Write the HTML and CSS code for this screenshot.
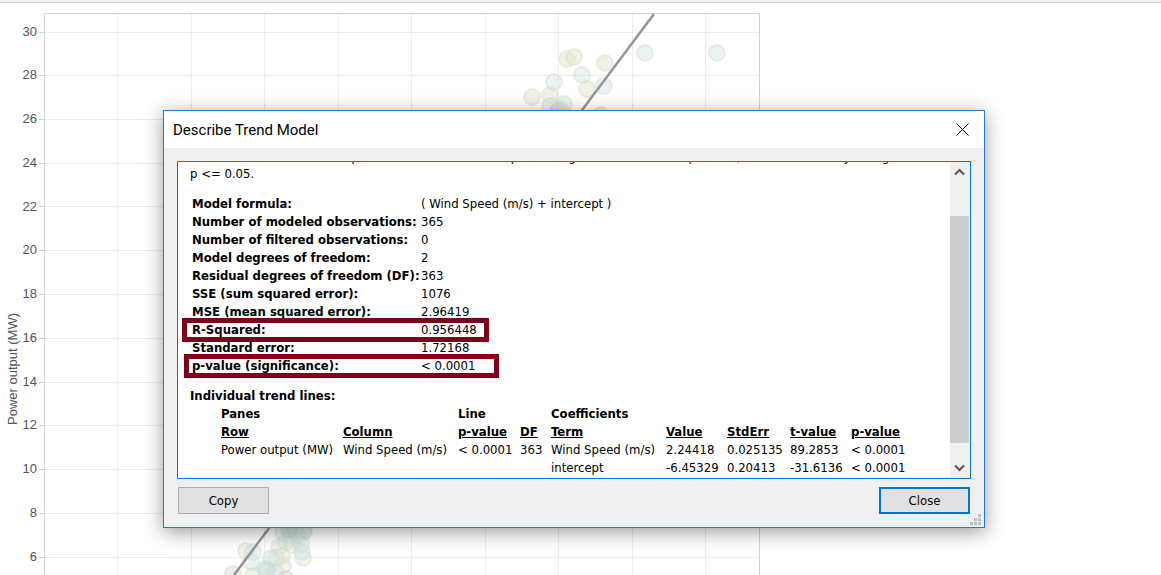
FILE: index.html
```html
<!DOCTYPE html>
<html lang="en">
<head>
<meta charset="utf-8">
<title>Describe Trend Model</title>
<link rel="stylesheet" href="styles.css">
</head>
<body>
<main class="sheet">
  <svg class="chart" width="762" height="575" viewBox="0 0 762 575" role="img" aria-label="Power output (MW) by wind speed">
    <path class="grid" d="M117.500 14V575M191.500 14V575M264.500 14V575M338.500 14V575M411.500 14V575M485.500 14V575M558.500 14V575M632.500 14V575M705.500 14V575M45 32.500H759M45 75.500H759M45 119.500H759M45 163.500H759M45 206.500H759M45 250.500H759M45 294.500H759M45 338.500H759M45 382.500H759M45 425.500H759M45 469.500H759M45 513.500H759M45 557.500H759"/>
    <path class="frame" d="M44.500 575V13.500H759.500V575M39 32.500H44M39 75.500H44M39 119.500H44M39 163.500H44M39 206.500H44M39 250.500H44M39 294.500H44M39 338.500H44M39 382.500H44M39 425.500H44M39 469.500H44M39 513.500H44M39 557.500H44"/>
    <g class="dots">
      <g class="yellow">
        <circle cx="567" cy="59" r="8"/><circle cx="574" cy="57" r="8"/><circle cx="605" cy="63" r="8"/>
        <circle cx="587" cy="89" r="8"/><circle cx="532" cy="97" r="8"/><circle cx="550" cy="95" r="8"/><circle cx="560" cy="109" r="8"/>
        <circle cx="246" cy="551" r="8"/><circle cx="279" cy="547" r="8"/><circle cx="282" cy="556" r="8"/><circle cx="303" cy="558" r="8"/>
        <circle cx="283" cy="566" r="8"/><circle cx="253" cy="576" r="8"/><circle cx="304" cy="531" r="8"/><circle cx="292" cy="545" r="8"/><circle cx="276" cy="558" r="8"/>
      </g>
      <g class="blue">
        <circle cx="645" cy="53" r="8"/><circle cx="717" cy="53" r="8"/><circle cx="582" cy="75" r="8"/><circle cx="554" cy="82" r="8"/>
        <circle cx="604" cy="86" r="8"/><circle cx="564" cy="104" r="8"/><circle cx="550" cy="106" r="8"/>
        <circle cx="253" cy="552" r="8"/><circle cx="251" cy="562" r="8"/><circle cx="271" cy="558" r="8"/><circle cx="265" cy="569" r="8"/>
        <circle cx="283" cy="532" r="8"/><circle cx="290" cy="535" r="8"/><circle cx="298" cy="535" r="8"/><circle cx="303" cy="532" r="8"/>
        <circle cx="286" cy="542" r="8"/><circle cx="301" cy="544" r="8"/><circle cx="302" cy="552" r="8"/><circle cx="275" cy="572" r="8"/><circle cx="295" cy="529" r="8"/>
      </g>
      <g class="teal">
        <circle cx="601" cy="115" r="8"/><circle cx="558" cy="111" r="8"/><circle cx="233" cy="574" r="8"/><circle cx="286" cy="579" r="8"/><circle cx="289" cy="530" r="8"/><circle cx="267" cy="570" r="8"/>
      </g>
    </g>
    <path class="trend" d="M234 575L654 14"/>
    <g class="ticks">
      <text x="37" y="36">30</text><text x="37" y="79">28</text><text x="37" y="123">26</text><text x="37" y="167">24</text>
      <text x="37" y="211">22</text><text x="37" y="254">20</text><text x="37" y="298">18</text><text x="37" y="342">16</text>
      <text x="37" y="386">14</text><text x="37" y="429">12</text><text x="37" y="473">10</text><text x="37" y="517">8</text><text x="37" y="561">6</text>
    </g>
    <text class="axis-title" transform="translate(17 369) rotate(-90)">Power output (MW)</text>
  </svg>

  <section class="dialog" role="dialog" aria-labelledby="dialog-title">
    <header class="titlebar">
      <h1 class="title" id="dialog-title">Describe Trend Model</h1>
      <button class="dismiss" type="button" aria-label="Close window">
        <svg width="13" height="13" viewBox="0 0 13 13"><path d="M.5 .5L12.500 12.500M12.500 .5L.5 12.500"/></svg>
      </button>
    </header>
    <div class="content">
      <div class="report">
        <div class="text">
          <p class="intro">A linear trend model is computed for sum of Power output (MW) given sum of Wind Speed (m/s). The model may be significant at<br>p &lt;= 0.05.</p>
          <table class="summary">
            <tr><th scope="row">Model formula:</th><td>( Wind Speed (m/s) + intercept )</td></tr>
            <tr><th scope="row">Number of modeled observations:</th><td>365</td></tr>
            <tr><th scope="row">Number of filtered observations:</th><td>0</td></tr>
            <tr><th scope="row">Model degrees of freedom:</th><td>2</td></tr>
            <tr><th scope="row">Residual degrees of freedom (DF):</th><td>363</td></tr>
            <tr><th scope="row">SSE (sum squared error):</th><td>1076</td></tr>
            <tr><th scope="row">MSE (mean squared error):</th><td>2.96419</td></tr>
            <tr class="marked marked-r"><th scope="row">R-Squared:</th><td>0.956448</td></tr>
            <tr><th scope="row">Standard error:</th><td>1.72168</td></tr>
            <tr class="marked marked-p"><th scope="row">p-value (significance):</th><td>&lt; 0.0001</td></tr>
          </table>
          <h2 class="subhead">Individual trend lines:</h2>
          <table class="lines">
            <colgroup><col class="c-row"><col class="c-name"><col class="c-p"><col class="c-df"><col class="c-name"><col class="c-num"><col class="c-err"><col class="c-num"><col class="c-p"></colgroup>
            <tr><th colspan="2">Panes</th><th colspan="2">Line</th><th colspan="5">Coefficients</th></tr>
            <tr class="names"><th>Row</th><th>Column</th><th>p-value</th><th>DF</th><th>Term</th><th>Value</th><th>StdErr</th><th>t-value</th><th>p-value</th></tr>
            <tr><td>Power output (MW)</td><td>Wind Speed (m/s)</td><td>&lt; 0.0001</td><td>363</td><td>Wind Speed (m/s)</td><td>2.24418</td><td>0.025135</td><td>89.2853</td><td>&lt; 0.0001</td></tr>
            <tr><td></td><td></td><td></td><td></td><td>intercept</td><td>-6.45329</td><td>0.20413</td><td>-31.6136</td><td>&lt; 0.0001</td></tr>
          </table>
        </div>
        <div class="scrollbar" aria-hidden="true">
          <svg width="11" height="8" viewBox="0 0 11 8"><path d="M1 6.500L5.500 2L10 6.500"/></svg>
          <div class="track"><div class="thumb"></div></div>
          <svg width="11" height="8" viewBox="0 0 11 8"><path d="M1 1.500L5.500 6L10 1.500"/></svg>
        </div>
      </div>
      <footer class="actions">
        <button class="btn" type="button">Copy</button>
        <button class="btn primary" type="button">Close</button>
      </footer>
    </div>
    <svg class="grip" width="11" height="11" viewBox="0 0 11 11"><path d="M8 0h3v3H8zM4 4h3v3H4zM8 4h3v3H8zM0 8h3v3H0zM4 8h3v3H4zM8 8h3v3H8z"/></svg>
  </section>
</main>
</body>
</html>
```
FILE: styles.css
```css
*, *::before, *::after { box-sizing: border-box; }
body {
  margin: 0;
  background: #fff;
  color: #000;
  font: 13px/18px "DejaVu Sans Condensed", "DejaVu Sans", Tahoma, sans-serif;
}
.sheet { position: relative; min-height: 100vh; overflow: hidden; }
.sheet::before {
  content: "";
  position: absolute;
  inset: 0 0 auto;
  height: 3px;
  background: #f2f2f2;
  border-bottom: 1px solid #d2d2d2;
}
.chart { display: block; }
.grid { fill: none; stroke: #ededed; }
.frame { fill: none; stroke: #d2d2d2; }
.trend { fill: none; stroke: #949494; stroke-width: 2.500; }
.dots circle { stroke-width: 2; }
.yellow { fill: rgba(228, 230, 200, .5); stroke: rgba(210, 223, 216, .45); }
.blue { fill: rgba(208, 228, 226, .45); stroke: rgba(206, 222, 220, .45); }
.teal { fill: rgba(200, 216, 210, .4); stroke: rgba(198, 214, 210, .45); }
.ticks, .axis-title {
  font: 13px "Liberation Sans", Arial, sans-serif;
  fill: #555;
}
.ticks { text-anchor: end; }
.axis-title { text-anchor: middle; }

.dialog {
  position: absolute;
  top: 110px;
  left: 163px;
  width: 822px;
  max-width: calc(100% - 163px);
  background: #f0f0f0;
  border: 1px solid #1a80d4;
  box-shadow: 0 4px 18px rgba(0, 0, 0, .4);
}
.titlebar {
  display: flex;
  align-items: center;
  justify-content: space-between;
  height: 37px;
  padding: 0 15px 0 9px;
  background: #fff;
}
.title { margin: 0; font: 15px/20px Roboto, "Segoe UI", sans-serif; }
.dismiss { display: flex; padding: 0; border: 0; background: none; }
.dismiss path { fill: none; stroke: #000; }
.content { padding: 13px; }
.report {
  display: flex;
  height: 318px;
  border: 1px solid #0078d7;
  background: #fff;
}
.text {
  display: flex;
  flex: 1;
  flex-direction: column;
  justify-content: flex-end;
  min-width: 0;
  padding: 0 12px 1px;
  overflow: hidden;
  white-space: nowrap;
}
.intro { margin: 0 0 13px; line-height: 17px; }
table { border-collapse: collapse; table-layout: fixed; }
th, td { height: 18px; padding: 0; text-align: left; }
th { font-weight: bold; }
.summary { width: 440px; margin: 0 0 12px 2px; }
.summary th { width: 229px; }
.marked { position: relative; }
.marked::after {
  content: "";
  position: absolute;
  top: -3px;
  bottom: -3px;
  border: 5px solid #80001a;
}
.marked-r::after { left: -10px; width: 307px; }
.marked-p::after { left: -8px; width: 315px; }
.subhead { margin: 0; font: inherit; font-weight: bold; }
.lines { width: 692px; margin-left: 31px; }
.c-row { width: 122px; }
.c-name { width: 115px; }
.c-p { width: 62px; }
.c-df { width: 31px; }
.c-num { width: 61px; }
.c-err { width: 63px; }
.names th { text-decoration: underline; }
.scrollbar {
  display: flex;
  flex-direction: column;
  align-items: center;
  width: 20px;
  padding: 6px 1px 6px 0;
  background: #f0f0f0;
}
.scrollbar path { fill: none; stroke: #555; stroke-width: 2; }
.track { flex: 1; align-self: stretch; padding: 40px 0 21px; }
.thumb { height: 100%; background: #cdcdcd; }
.actions {
  display: flex;
  justify-content: space-between;
  padding: 8px 1px 0;
}
.btn {
  width: 91px;
  height: 27px;
  padding: 0;
  border: 1px solid #adadad;
  background: #e1e1e1;
  color: #000;
  font: inherit;
}
.primary { border: 2px solid #0078d7; }
.grip { position: absolute; right: 3px; bottom: 2px; fill: #bfbfbf; }
```
